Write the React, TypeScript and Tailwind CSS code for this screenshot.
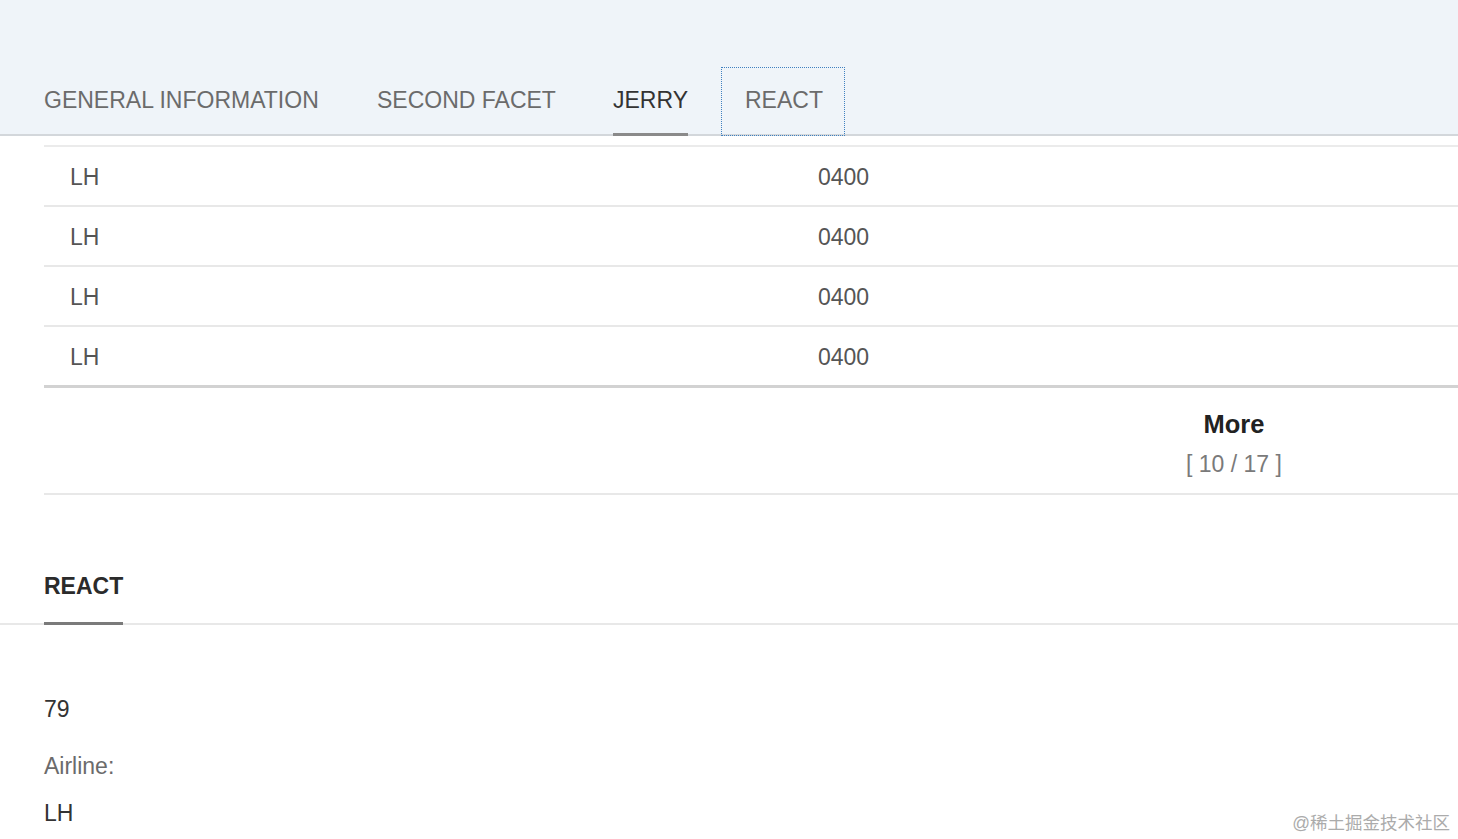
import React from "react";

const rows = [0, 1, 2, 3];

export default function App() {
  return (
    <div className="relative w-[1458px] h-[839px] overflow-hidden bg-white font-['Liberation_Sans',Arial,sans-serif] text-[23px]">
      {/* Header with tabs */}
      <div className="h-[136px] bg-[#eff4f9] border-b-2 border-[#d3d7db] flex items-end pl-[44px]">
        <div className="w-[333px] h-[67px] pb-[2px] flex items-center text-[#6b6b6b] leading-[28px]">
          GENERAL INFORMATION
        </div>
        <div className="w-[236px] h-[67px] pb-[2px] flex items-center text-[#6b6b6b] leading-[28px]">
          SECOND FACET
        </div>
        <div className="w-[108px] h-[67px] flex items-stretch text-[#333333] leading-[28px]">
          <div className="relative h-[67px] pb-[2px] flex items-center">
            JERRY
            <span className="absolute left-0 right-0 -bottom-[2px] h-[3px] bg-[#8a8a8a]" />
          </div>
        </div>
        <div className="relative w-[124px] h-[67px] pb-[2px] flex items-center pl-[24px] text-[#6b6b6b] leading-[28px]">
          REACT
          <span className="absolute left-0 right-0 top-0 -bottom-[2px] border border-dotted border-[#3f80c0]" />
        </div>
      </div>

      {/* Table */}
      <div className="ml-[44px] mt-[9px] border-t-2 border-[#ebebeb]">
        {rows.map((i) => (
          <div
            key={i}
            className={
              i === 3
                ? "h-[61px] flex items-center pt-[1px] border-b-[3px] border-[#d2d2d2] text-[#555555]"
                : "h-[60px] flex items-center pt-[1px] border-b-2 border-[#e8e8e8] text-[#555555]"
            }
          >
            <div className="w-[774px] pl-[26px] leading-[28px]">LH</div>
            <div className="leading-[28px]">0400</div>
          </div>
        ))}
        <div className="flex justify-end border-b-2 border-[#e8e8e8] pt-[21px] pb-[15px]">
          <div className="w-[200px] mr-[124px] flex flex-col items-center">
            <div className="font-bold text-[25.5px] leading-[30px] text-[#222222]">More</div>
            <div className="mt-[11px] leading-[28px] text-[#7a7a7a]">[ 10 / 17 ]</div>
          </div>
        </div>
      </div>

      {/* Section heading */}
      <div className="mt-[74px] border-b-2 border-[#e8e8e8] pl-[44px]">
        <span className="relative inline-block pb-[23px] font-bold leading-[28px] text-[#2b2b2b]">
          REACT
          <span className="absolute left-0 right-0 -bottom-[2px] h-[3px] bg-[#7a7a7a]" />
        </span>
      </div>

      <div className="pl-[44px]">
        <div className="mt-[70px] leading-[28px] text-[#333333]">79</div>
        <div className="mt-[29px] leading-[28px] text-[#6b6b6b]">Airline:</div>
        <div className="mt-[19px] leading-[28px] text-[#333333]">LH</div>
      </div>

      <div className="absolute right-[8px] bottom-[4px] text-[17.5px] leading-[24px] text-[#ababab] font-['Liberation_Sans','Noto_Sans_CJK_SC',sans-serif]">
        @稀土掘金技术社区
      </div>
    </div>
  );
}
